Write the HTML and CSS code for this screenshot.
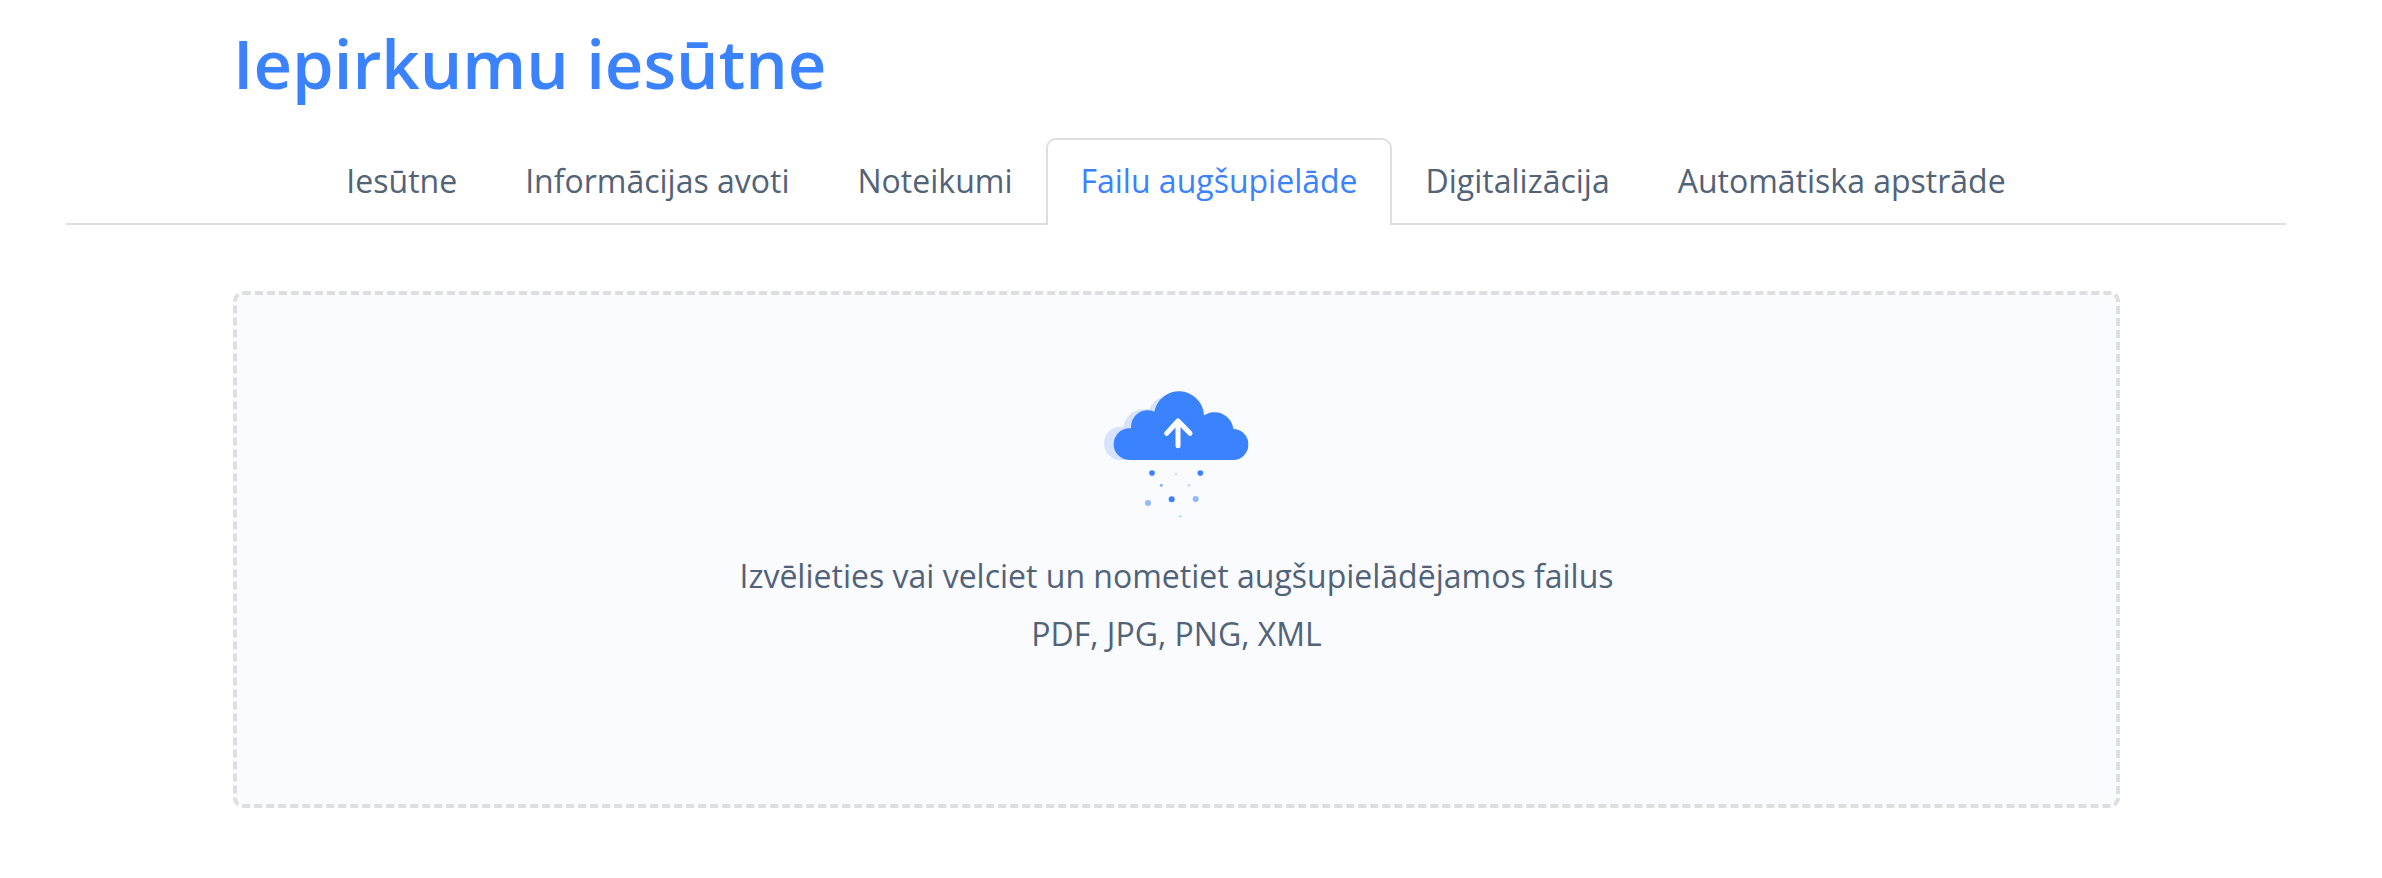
FILE: index.html
```html
<!DOCTYPE html>
<html lang="lv">
<head>
<meta charset="utf-8">
<title>Iepirkumu iesūtne</title>
<link rel="stylesheet" href="styles.css">
</head>
<body>
<div class="page">
  <h1 class="title">Iepirkumu iesūtne</h1>
  <nav class="tabs">
    <a class="tab">Iesūtne</a>
    <a class="tab">Informācijas avoti</a>
    <a class="tab">Noteikumi</a>
    <a class="tab tab-active">Failu augšupielāde</a>
    <a class="tab">Digitalizācija</a>
    <a class="tab">Automātiska apstrāde</a>
  </nav>
  <section class="dropzone">
    <svg class="cloud" viewBox="0 0 780 510" width="260" height="170" aria-hidden="true">
      <path class="cloud-back" d="M182 270 A50 50 0 0 1 182 170 L190 170 A62 60 0 0 1 255 118 L268 118 A60 60 0 0 1 310 80 L400 80 L400 270 Z"/>
      <path class="cloud-main" d="M208 270 A47 47.500 0 0 1 208 175 L213 175 A50 50 0 0 1 283 125 A75.200 75.200 0 0 1 432 136 A57 57 0 0 1 520 177 A45 46.500 0 0 1 520 270 Z"/>
      <path class="cloud-arrow" d="M354 227 L354 153 M320 190 L354 153 L390 190"/>
      <circle class="dot-a" cx="276" cy="309" r="8.500"/>
      <circle class="dot-d" cx="348" cy="312" r="3.500"/>
      <circle class="dot-a" cx="421" cy="309" r="8.500"/>
      <circle class="dot-c" cx="304" cy="346" r="4.500"/>
      <circle class="dot-d" cx="387" cy="346" r="4.500"/>
      <circle class="dot-b" cx="264" cy="399" r="9"/>
      <circle class="dot-a" cx="335" cy="388" r="9"/>
      <circle class="dot-b" cx="407" cy="387" r="9"/>
      <circle class="dot-d" cx="361" cy="439" r="4.500"/>
    </svg>
    <p class="drop-text">Izvēlieties vai velciet un nometiet augšupielādējamos failus</p>
    <p class="drop-text">PDF, JPG, PNG, XML</p>
  </section>
</div>
</body>
</html>
```

FILE: styles.css
```css
* { box-sizing: border-box; }
html, body { margin: 0; padding: 0; background: #fff; }
body { font-family: "Open Sans", sans-serif; color: #526378; }
.page { width: 2220px; margin: 0 0 0 66px; }
.title {
  margin: 0;
  padding: 15px 0 0 167px;
  height: 138px;
  font-size: 67px;
  line-height: 96px;
  font-weight: 600;
  color: #3b82ff;
}
.tabs {
  display: flex;
  justify-content: center;
  height: 87px;
  border-bottom: 2px solid #dedede;
}
.tab {
  height: 87px;
  padding: 0 32px;
  font-size: 32px;
  line-height: 82px;
  border: 2px solid transparent;
  border-bottom: 0;
  border-radius: 10px 10px 0 0;
  color: #526378;
}
.tab-active {
  color: #3b82ff;
  background: #fff;
  border-color: #dedede;
}
.dropzone {
  width: 1887px;
  height: 517px;
  margin: 66px 0 0 167px;
  padding-top: 75px;
  display: flex;
  flex-direction: column;
  align-items: center;
  background: #f9fbff;
  border: 4px dashed #dedede;
  border-radius: 10px;
}
.cloud { display: block; margin: 0 0 7px 26px; }
.drop-text {
  margin: 0;
  font-size: 32px;
  line-height: 58px;
}
.cloud-back { fill: #d6e3fb; }
.cloud-main { fill: #3b82ff; }
.cloud-arrow { fill: none; stroke: #fff; stroke-width: 15; stroke-linecap: round; stroke-linejoin: round; }
.dot-a { fill: #3b82ff; }
.dot-b { fill: #93b8fd; }
.dot-c { fill: #86aff8; }
.dot-d { fill: #c9dbfb; }
```
